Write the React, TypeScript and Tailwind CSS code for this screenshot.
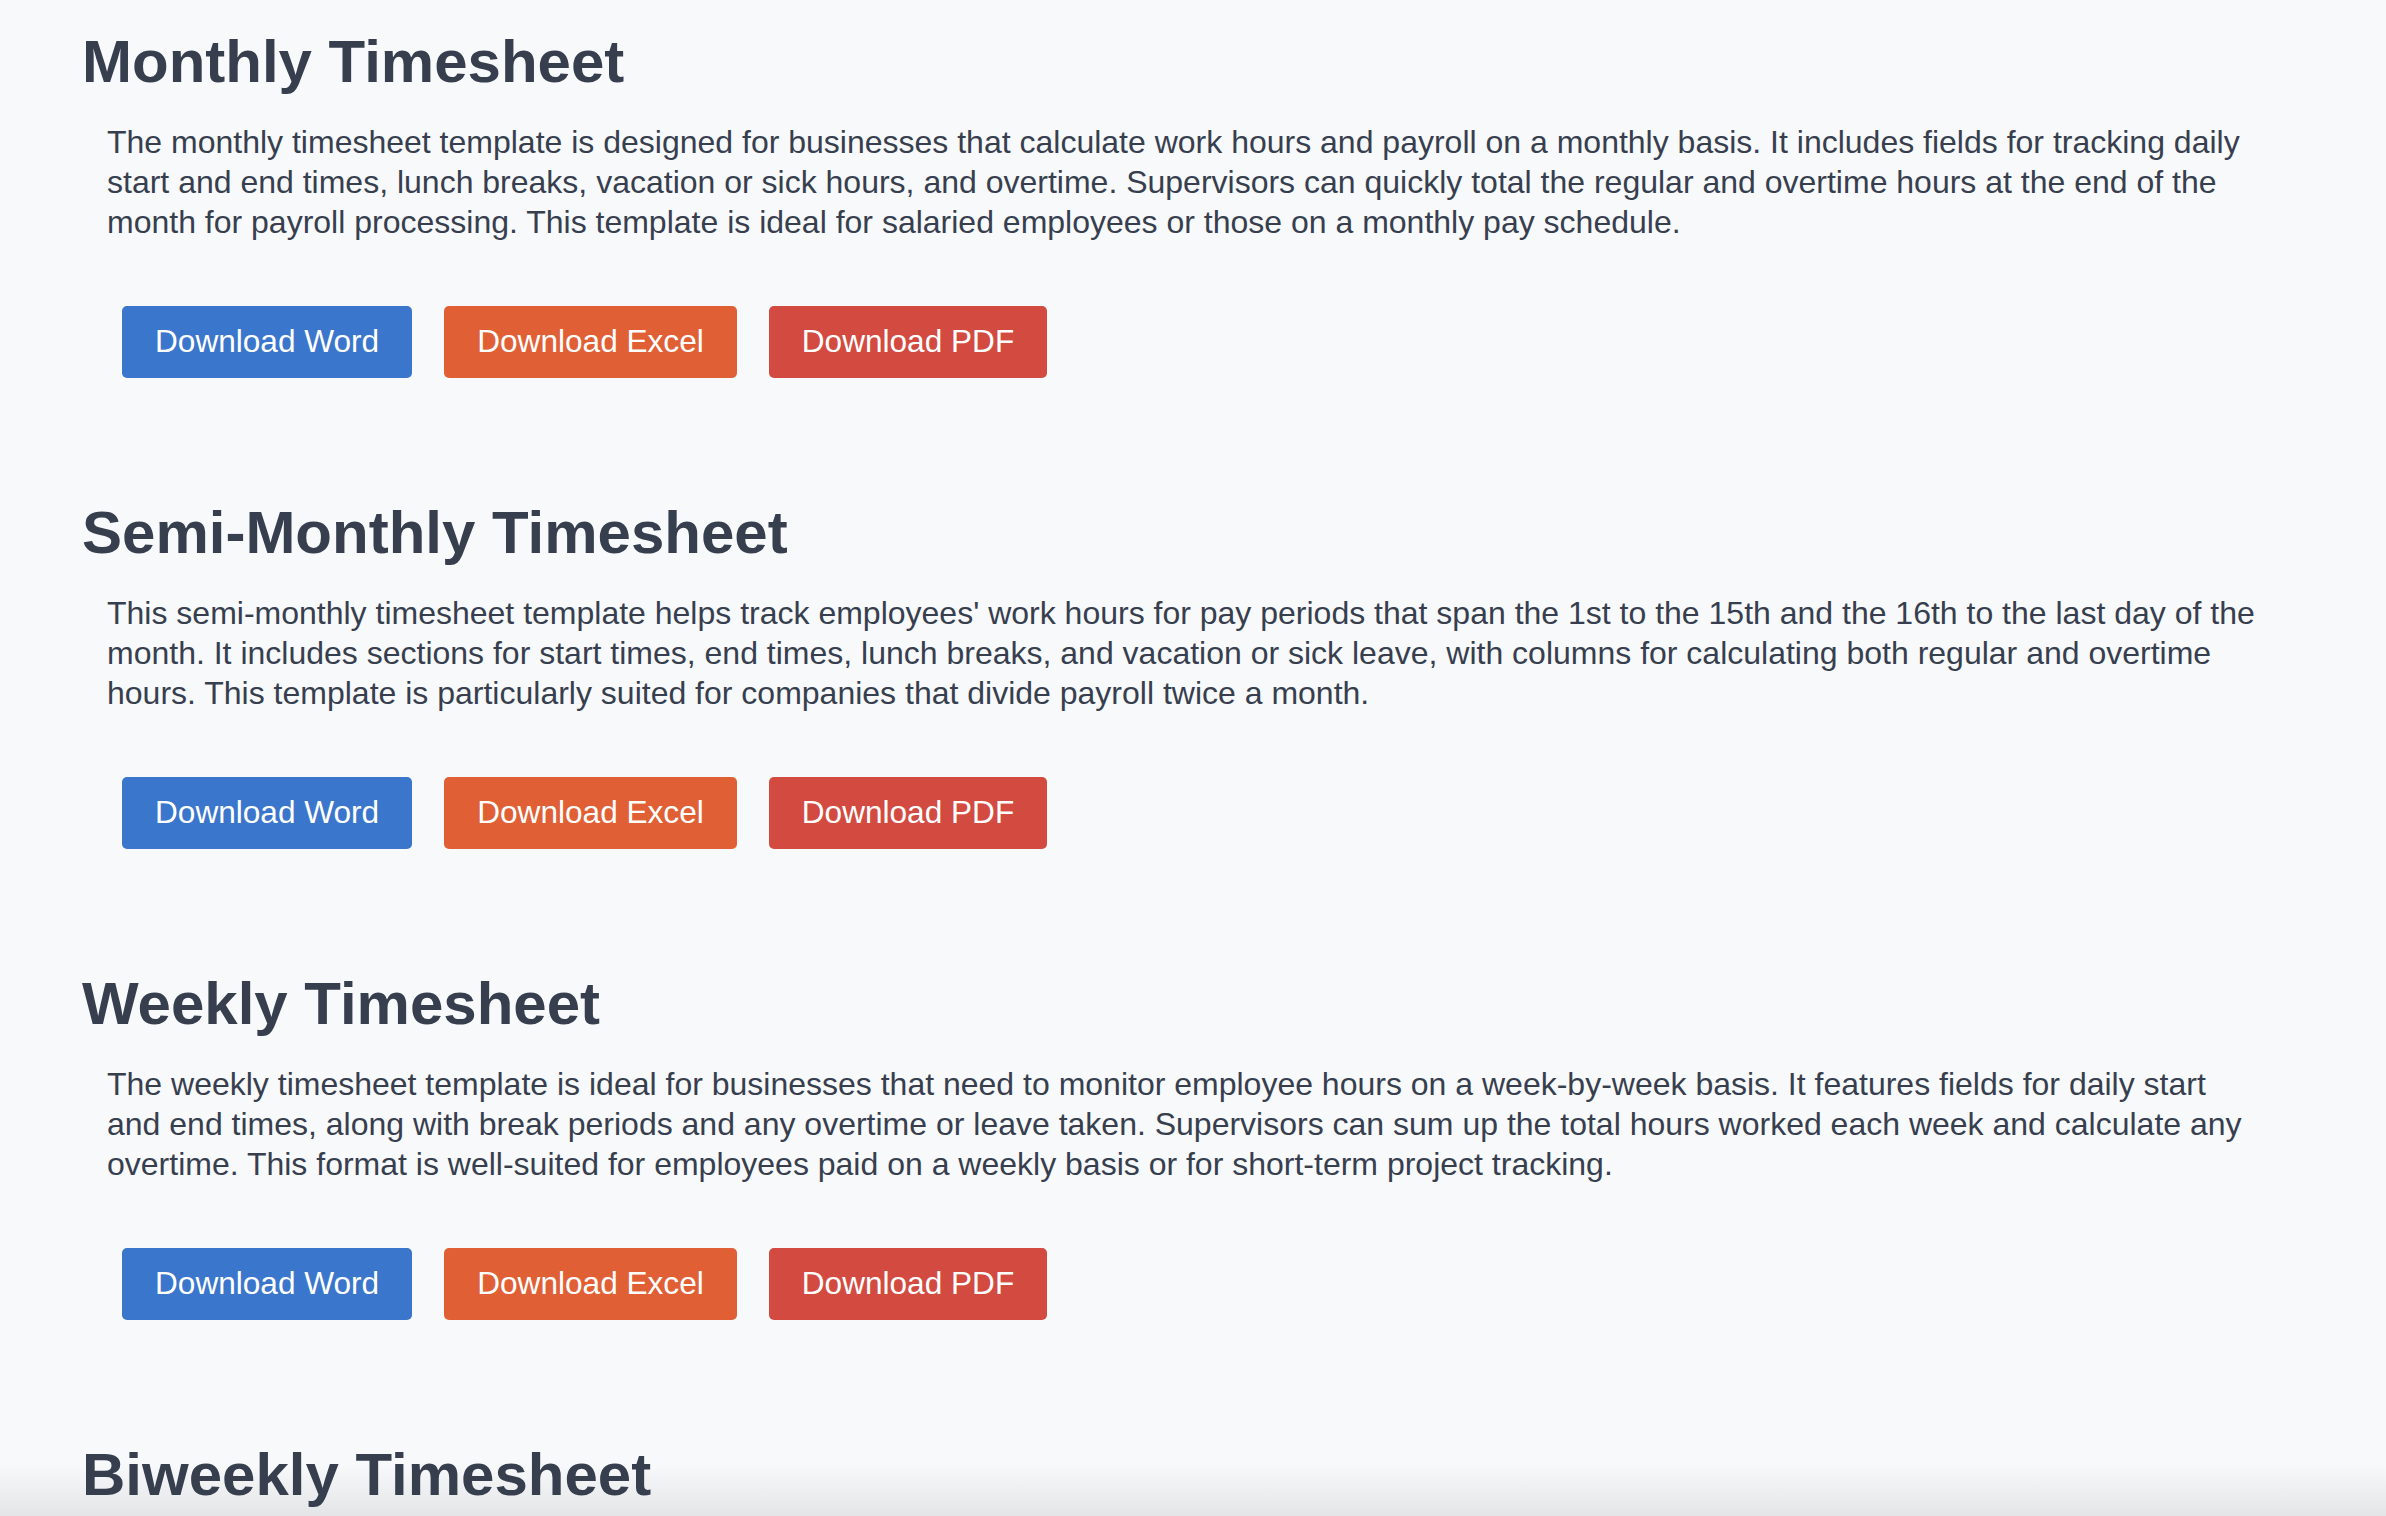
const sections = [
  {
    title: "Monthly Timesheet",
    text: "The monthly timesheet template is designed for businesses that calculate work hours and payroll on a monthly basis. It includes fields for tracking daily start and end times, lunch breaks, vacation or sick hours, and overtime. Supervisors can quickly total the regular and overtime hours at the end of the month for payroll processing. This template is ideal for salaried employees or those on a monthly pay schedule.",
  },
  {
    title: "Semi-Monthly Timesheet",
    text: "This semi-monthly timesheet template helps track employees' work hours for pay periods that span the 1st to the 15th and the 16th to the last day of the month. It includes sections for start times, end times, lunch breaks, and vacation or sick leave, with columns for calculating both regular and overtime hours. This template is particularly suited for companies that divide payroll twice a month.",
  },
  {
    title: "Weekly Timesheet",
    text: "The weekly timesheet template is ideal for businesses that need to monitor employee hours on a week-by-week basis. It features fields for daily start and end times, along with break periods and any overtime or leave taken. Supervisors can sum up the total hours worked each week and calculate any overtime. This format is well-suited for employees paid on a weekly basis or for short-term project tracking.",
  },
  {
    title: "Biweekly Timesheet",
    text: "The biweekly timesheet template is used to record employee hours over a two-week period. It includes fields for daily start and end times, breaks, and overtime, making it easy to calculate pay for each biweekly payroll cycle.",
  },
];

function TemplateSection({ title, text }: { title: string; text: string }) {
  return (
    <section className="pt-[26px] pb-[93px]">
      <h2 className="ml-[82px] text-[60px] leading-[72px] font-bold text-[#373f4f]">{title}</h2>
      <p className="mt-[24px] ml-[107px] w-[2154px] text-[32px] leading-[40px] text-[#373f4f]">{text}</p>

      <div className="mt-[64px] ml-[122px] flex gap-[32px]">
        <button className="h-[72px] px-[33px] rounded-[5px] bg-[#3a76cb] text-white text-[31.6px]">
          Download Word
        </button>
        <button className="h-[72px] px-[33px] rounded-[5px] bg-[#e15f35] text-white text-[31.6px]">
          Download Excel
        </button>
        <button className="h-[72px] px-[33px] rounded-[5px] bg-[#d34a40] text-white text-[31.6px]">
          Download PDF
        </button>
      </div>
    </section>
  );
}

export default function App() {
  return (
    <div
      className="h-screen overflow-hidden bg-[linear-gradient(to_bottom,#f8f9fb_calc(100%-52px),#e4e5e6)]"
      style={{ fontFamily: '"Liberation Sans", Arial, sans-serif' }}
    >
      {sections.map((s) => (
        <TemplateSection key={s.title} title={s.title} text={s.text} />
      ))}
    </div>
  );
}
